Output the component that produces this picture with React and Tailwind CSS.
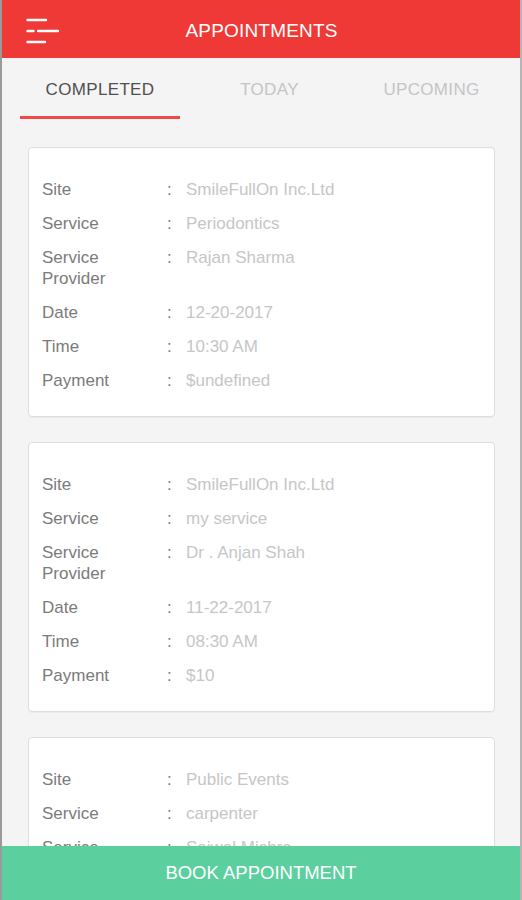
import React from "react";

const cards = [
  [
    ["Site", "SmileFullOn Inc.Ltd"],
    ["Service", "Periodontics"],
    ["Service Provider", "Rajan Sharma"],
    ["Date", "12-20-2017"],
    ["Time", "10:30 AM"],
    ["Payment", "$undefined"],
  ],
  [
    ["Site", "SmileFullOn Inc.Ltd"],
    ["Service", "my service"],
    ["Service Provider", "Dr . Anjan Shah"],
    ["Date", "11-22-2017"],
    ["Time", "08:30 AM"],
    ["Payment", "$10"],
  ],
  [
    ["Site", "Public Events"],
    ["Service", "carpenter"],
    ["Service Provider", "Sajwal Mishra"],
    ["Date", "11-22-2017"],
    ["Time", "08:30 AM"],
    ["Payment", "$10"],
  ],
];

function MenuIcon() {
  return (
    <svg width="36" height="28" viewBox="0 0 36 28" className="block">
      <g stroke="#fff" strokeWidth="2.4" strokeLinecap="round">
        <line x1="1.5" y1="2" x2="20" y2="2" />
        <line x1="1.5" y1="13" x2="7.5" y2="13" />
        <line x1="12" y1="13" x2="32" y2="13" />
        <line x1="1.5" y1="24" x2="19" y2="24" />
      </g>
    </svg>
  );
}

function Card({ rows }) {
  return (
    <div className="ml-[26px] mr-[25px] mb-[25px] bg-white border border-[#dedede] rounded-[4px] pt-[31px] pb-[25px] pl-[13px] pr-[13px] flex flex-col gap-[13px] shadow-[0_1px_1px_rgba(0,0,0,0.04)]">
      {rows.map(([k, v], i) => (
        <div key={i} className="flex text-[17px] leading-[21px]">
          <div className="w-[125px] text-[#7b7b7b] whitespace-pre-line">
            {k === "Service Provider" ? "Service\nProvider" : k}
          </div>
          <div className="w-[19px] text-[#7b7b7b]">:</div>
          <div className="text-[#c6c6c6]">{v}</div>
        </div>
      ))}
    </div>
  );
}

export default function App() {
  return (
    <div
      className="w-[522px] h-[900px] flex flex-col bg-[#f4f4f4] overflow-hidden border-l-[2px] border-r-[2px] border-l-[#9a9a9a] border-r-[#b5b5b5]"
      style={{ fontFamily: '"Liberation Sans", Arial, sans-serif' }}
    >
      <div className="h-[58px] shrink-0 bg-[#ee3936] relative flex items-center justify-center">
        <div className="absolute left-[24px] top-[18px]">
          <MenuIcon />
        </div>
        <div className="text-white text-[19px] tracking-[0.01em] ml-[1px] mt-[4px]">APPOINTMENTS</div>
      </div>
      <div className="h-[62px] shrink-0 grid grid-cols-[164px_167px_165px] pl-[16px]">
        <div className="flex flex-col">
          <div className="flex-1 flex items-center justify-center pt-[5px] text-[17px] text-[#505050] font-medium tracking-[0.02em]">
            COMPLETED
          </div>
          <div className="h-[3px] mx-[2px] mb-[1px] bg-[#ee4a47]" />
        </div>
        <div className="flex items-center justify-center pt-[2px] text-[17px] text-[#c4c4c4] tracking-[0.02em]">
          <span className="ml-[8px]">TODAY</span>
        </div>
        <div className="flex items-center justify-center pt-[2px] text-[17px] text-[#c4c4c4] tracking-[0.02em]">
          UPCOMING
        </div>
      </div>
      <div className="flex-1 overflow-hidden pt-[27px]">
        {cards.map((c, i) => (
          <Card key={i} rows={c} />
        ))}
      </div>
      <div className="h-[54px] shrink-0 bg-[#5ccf9e] flex items-center justify-center text-white text-[18.5px]">
        BOOK APPOINTMENT
      </div>
    </div>
  );
}
